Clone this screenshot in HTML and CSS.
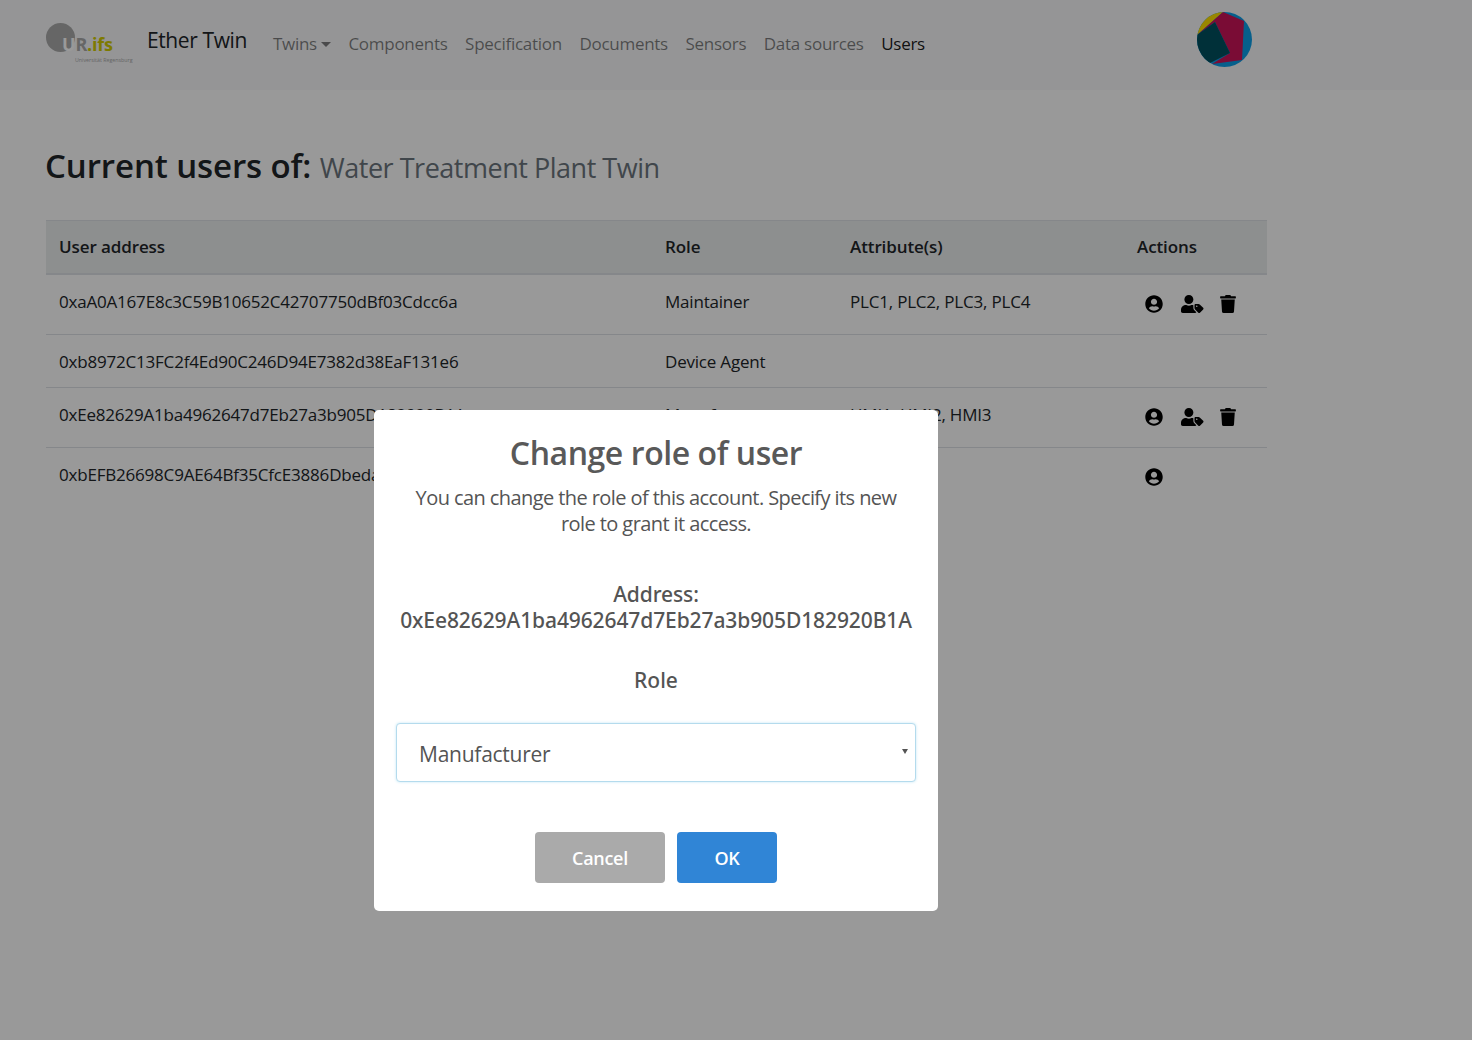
FILE: index.html
```html
<!DOCTYPE html>
<html lang="en">
<head>
  <meta charset="UTF-8">
  <meta name="viewport" content="width=device-width, initial-scale=1.0">
  <title>Ether Twin - Users</title>
  <link rel="stylesheet" href="styles.css">
</head>
<body>
  <nav class="navbar">
    <a class="logo" href="#">
      <svg class="logo-mark" viewBox="0 0 29 29" width="29" height="29">
        <circle cx="14.5" cy="14.5" r="14.5" fill="#aaa"/>
      </svg>
      <span class="logo-text"><span class="logo-u">U</span>R<span class="logo-ifs">.ifs</span></span>
      <span class="logo-sub">Universität Regensburg</span>
    </a>
    <a class="brand" href="#">Ether Twin</a>
    <ul class="nav-links">
      <li><a href="#">Twins<span class="caret"></span></a></li>
      <li><a href="#">Components</a></li>
      <li><a href="#">Specification</a></li>
      <li><a href="#">Documents</a></li>
      <li><a href="#">Sensors</a></li>
      <li><a href="#">Data sources</a></li>
      <li><a class="active" href="#">Users</a></li>
    </ul>
    <svg class="avatar" viewBox="0 0 55 55" width="55" height="55">
      <defs><clipPath id="avatarClip"><circle cx="27.5" cy="27.5" r="27.5"/></clipPath></defs>
      <g clip-path="url(#avatarClip)">
        <rect width="55" height="55" fill="#0b9fe8"/>
        <polygon points="0,0 26,0 0,23" fill="#ffe000"/>
        <polygon points="26,0 47,9 45,48 15,52 33,41 18,10 0,23" fill="#cc1459"/>
        <polygon points="0,23 18,10 33,41 13,51 0,45" fill="#005060"/>
      </g>
    </svg>
  </nav>

  <main class="content">
    <h2 class="page-title">Current users of: <small>Water Treatment Plant Twin</small></h2>
    <table class="users-table">
      <thead>
        <tr>
          <th class="col-address">User address</th>
          <th class="col-role">Role</th>
          <th class="col-attr">Attribute(s)</th>
          <th>Actions</th>
        </tr>
      </thead>
      <tbody>
        <tr>
          <td>0xaA0A167E8c3C59B10652C42707750dBf03Cdcc6a</td>
          <td>Maintainer</td>
          <td>PLC1, PLC2, PLC3, PLC4</td>
          <td>
            <div class="actions">
              <svg class="icon" viewBox="0 0 496 512"><path d="M248 8C111 8 0 119 0 256s111 248 248 248 248-111 248-248S385 8 248 8zm0 96c48.6 0 88 39.4 88 88s-39.4 88-88 88-88-39.4-88-88 39.4-88 88-88zm0 344c-58.7 0-111.3-26.6-146.5-68.2 18.8-35.4 55.6-59.8 98.5-59.8 2.4 0 4.8.4 7.1 1.1 13 4.2 26.6 6.9 40.9 6.9 14.3 0 28-2.7 40.9-6.9 2.3-.7 4.7-1.1 7.1-1.1 42.9 0 79.7 24.4 98.5 59.8C359.3 421.4 306.7 448 248 448z"/></svg>
              <svg class="icon icon-tag" viewBox="0 0 640 512"><path d="M630.6 364.9l-90.3-90.2c-12-12-28.3-18.7-45.3-18.7h-79.3c-17.7 0-32 14.3-32 32v79.2c0 17 6.7 33.2 18.7 45.2l90.3 90.2c12.5 12.5 32.8 12.5 45.3 0l92.5-92.5c12.6-12.5 12.6-32.7.1-45.2zm-182.8-21c-13.3 0-24-10.7-24-24s10.7-24 24-24 24 10.7 24 24c0 13.2-10.7 24-24 24zm-223.8-88c70.7 0 128-57.3 128-128C352 57.3 294.7 0 224 0S96 57.3 96 128c0 70.6 57.3 128 128 128zm127.8 111.2V294c-12.2-3.6-24.9-6.2-38.2-6.2h-16.7c-22.2 10.2-46.9 16-72.9 16s-50.6-5.8-72.9-16h-16.7C60.2 288 0 348.2 0 422.4V464c0 26.5 21.5 48 48 48h352c15.5 0 29.1-7.5 37.9-18.9l-58-58c-18.1-18.1-28.1-42.2-28.1-67.9z"/></svg>
              <svg class="icon icon-trash" viewBox="0 0 448 512"><path d="M432 32H312l-9.4-18.7A24 24 0 0 0 281.1 0H166.8a23.72 23.72 0 0 0-21.4 13.3L136 32H16A16 16 0 0 0 0 48v32a16 16 0 0 0 16 16h416a16 16 0 0 0 16-16V48a16 16 0 0 0-16-16zM53.2 467a48 48 0 0 0 47.9 45h245.8a48 48 0 0 0 47.9-45L416 128H32z"/></svg>
            </div>
          </td>
        </tr>
        <tr class="row-short">
          <td>0xb8972C13FC2f4Ed90C246D94E7382d38EaF131e6</td>
          <td>Device Agent</td>
          <td></td>
          <td></td>
        </tr>
        <tr>
          <td>0xEe82629A1ba4962647d7Eb27a3b905D182920B1A</td>
          <td>Manufacturer</td>
          <td>HMI1, HMI2, HMI3</td>
          <td>
            <div class="actions">
              <svg class="icon" viewBox="0 0 496 512"><path d="M248 8C111 8 0 119 0 256s111 248 248 248 248-111 248-248S385 8 248 8zm0 96c48.6 0 88 39.4 88 88s-39.4 88-88 88-88-39.4-88-88 39.4-88 88-88zm0 344c-58.7 0-111.3-26.6-146.5-68.2 18.8-35.4 55.6-59.8 98.5-59.8 2.4 0 4.8.4 7.1 1.1 13 4.2 26.6 6.9 40.9 6.9 14.3 0 28-2.7 40.9-6.9 2.3-.7 4.7-1.1 7.1-1.1 42.9 0 79.7 24.4 98.5 59.8C359.3 421.4 306.7 448 248 448z"/></svg>
              <svg class="icon icon-tag" viewBox="0 0 640 512"><path d="M630.6 364.9l-90.3-90.2c-12-12-28.3-18.7-45.3-18.7h-79.3c-17.7 0-32 14.3-32 32v79.2c0 17 6.7 33.2 18.7 45.2l90.3 90.2c12.5 12.5 32.8 12.5 45.3 0l92.5-92.5c12.6-12.5 12.6-32.7.1-45.2zm-182.8-21c-13.3 0-24-10.7-24-24s10.7-24 24-24 24 10.7 24 24c0 13.2-10.7 24-24 24zm-223.8-88c70.7 0 128-57.3 128-128C352 57.3 294.7 0 224 0S96 57.3 96 128c0 70.6 57.3 128 128 128zm127.8 111.2V294c-12.2-3.6-24.9-6.2-38.2-6.2h-16.7c-22.2 10.2-46.9 16-72.9 16s-50.6-5.8-72.9-16h-16.7C60.2 288 0 348.2 0 422.4V464c0 26.5 21.5 48 48 48h352c15.5 0 29.1-7.5 37.9-18.9l-58-58c-18.1-18.1-28.1-42.2-28.1-67.9z"/></svg>
              <svg class="icon icon-trash" viewBox="0 0 448 512"><path d="M432 32H312l-9.4-18.7A24 24 0 0 0 281.1 0H166.8a23.72 23.72 0 0 0-21.4 13.3L136 32H16A16 16 0 0 0 0 48v32a16 16 0 0 0 16 16h416a16 16 0 0 0 16-16V48a16 16 0 0 0-16-16zM53.2 467a48 48 0 0 0 47.9 45h245.8a48 48 0 0 0 47.9-45L416 128H32z"/></svg>
            </div>
          </td>
        </tr>
        <tr class="row-last">
          <td>0xbEFB26698C9AE64Bf35CfcE3886DbedaC41C2f4e</td>
          <td></td>
          <td></td>
          <td>
            <div class="actions">
              <svg class="icon" viewBox="0 0 496 512"><path d="M248 8C111 8 0 119 0 256s111 248 248 248 248-111 248-248S385 8 248 8zm0 96c48.6 0 88 39.4 88 88s-39.4 88-88 88-88-39.4-88-88 39.4-88 88-88zm0 344c-58.7 0-111.3-26.6-146.5-68.2 18.8-35.4 55.6-59.8 98.5-59.8 2.4 0 4.8.4 7.1 1.1 13 4.2 26.6 6.9 40.9 6.9 14.3 0 28-2.7 40.9-6.9 2.3-.7 4.7-1.1 7.1-1.1 42.9 0 79.7 24.4 98.5 59.8C359.3 421.4 306.7 448 248 448z"/></svg>
            </div>
          </td>
        </tr>
      </tbody>
    </table>
  </main>

  <div class="overlay">
    <div class="modal">
      <h2 class="modal-title">Change role of user</h2>
      <p class="modal-text">You can change the role of this account. Specify its new role to grant it access.</p>
      <p class="modal-address">Address:<br>0xEe82629A1ba4962647d7Eb27a3b905D182920B1A</p>
      <label class="modal-label" for="role">Role</label>
      <div class="select-wrap">
        <select class="modal-select" id="role">
          <option>Manufacturer</option>
          <option>Maintainer</option>
          <option>Device Agent</option>
        </select>
      </div>
      <div class="modal-buttons">
        <button class="btn btn-cancel" type="button">Cancel</button>
        <button class="btn btn-ok" type="button">OK</button>
      </div>
    </div>
  </div>
</body>
</html>
```

FILE: styles.css
```css
* {
  box-sizing: border-box;
}

body {
  font-family: "Open Sans", "Noto Sans", Arial, sans-serif;
  background-color: #fff;
  color: #212529;
  margin: 0;
  height: 1040px;
  overflow: hidden;
  font-size: 16px;
}

a {
  text-decoration: none;
  color: inherit;
}

/* Navbar */
.navbar {
  display: flex;
  align-items: center;
  height: 90px;
  padding: 0 0 0 46px;
  background-color: #f8f9fa;
}

.logo {
  position: relative;
  display: block;
  width: 87px;
  height: 46px;
  margin-top: 2px;
}

.logo-mark {
  position: absolute;
  left: 0;
  top: 0;
}

.logo-text {
  position: absolute;
  left: 16px;
  top: 9px;
  font-size: 18px;
  font-weight: 700;
  line-height: 24px;
  letter-spacing: -0.2px;
  color: #aaa;
}

.logo-u {
  color: #fff;
}

.logo-ifs {
  color: #d2cc00;
}

.logo-sub {
  position: absolute;
  left: 29px;
  top: 33px;
  font-size: 5.3px;
  white-space: nowrap;
  color: #aaa;
}

.brand {
  margin-left: 14px;
  margin-top: -10px;
  font-size: 21px;
  color: #212529;
  letter-spacing: -0.4px;
}

.nav-links {
  display: flex;
  list-style: none;
  margin: -4px 0 0 26px;
  padding: 0;
  gap: 17.5px;
  font-size: 17px;
  letter-spacing: -0.27px;
  color: rgba(0, 0, 0, 0.5);
}

.nav-links .active {
  color: rgba(0, 0, 0, 0.9);
}

.caret {
  display: inline-block;
  margin-left: 4px;
  vertical-align: 3px;
  border-top: 5px solid;
  border-left: 5px solid transparent;
  border-right: 5px solid transparent;
}

.avatar {
  position: absolute;
  left: 1197px;
  top: 12px;
}

/* Page */
.content {
  padding: 54px 0 0 46px;
  width: 1267px;
}

.page-title {
  margin: 0 0 32px -1px;
  height: 44px;
  font-size: 33px;
  font-weight: 600;
  line-height: 44px;
  letter-spacing: -0.1px;
}

.page-title small {
  font-size: 27px;
  font-weight: 400;
  letter-spacing: -0.48px;
  color: #6c757d;
}

.users-table {
  width: 100%;
  border-collapse: separate;
  border-spacing: 0;
  table-layout: fixed;
  font-size: 17px;
  letter-spacing: -0.2px;
}

.users-table th {
  height: 55px;
  padding: 0 13px 2px;
  text-align: left;
  font-weight: 600;
  font-size: 17px;
  letter-spacing: -0.1px;
  background-color: #eceeef;
  color: #212529;
  border-top: 1px solid #dee2e6;
  border-bottom: 2px solid #dee2e6;
}

.col-address {
  width: 606px;
}

.col-role {
  width: 185px;
}

.col-attr {
  width: 287px;
}

.users-table td {
  height: 60px;
  padding: 15px 13px 0;
  vertical-align: top;
  border-bottom: 1px solid #dee2e6;
  white-space: nowrap;
}

.users-table .row-short td {
  height: 53px;
}

.users-table .row-last td {
  border-bottom: none;
}

.actions {
  display: flex;
  align-items: center;
  gap: 18px;
  padding: 5px 0 0 8px;
}

.icon {
  width: 18px;
  height: 18px;
  fill: #000;
  flex: none;
}

.icon-tag {
  width: 22.5px;
}

.icon-trash {
  width: 16px;
  margin-left: -1.5px;
}

/* Modal */
.overlay {
  position: fixed;
  inset: 0;
  padding: 410px 0 0 374px;
  background-color: rgba(0, 0, 0, 0.4);
}

.modal {
  display: flex;
  flex-direction: column;
  align-items: center;
  width: 564px;
  height: 501px;
  padding: 20px 22px 0;
  background-color: #fff;
  border-radius: 5px;
  text-align: center;
  color: #545454;
}

.modal-title {
  margin: 0;
  font-size: 32px;
  font-weight: 600;
  line-height: 46px;
  color: #595959;
  letter-spacing: -0.43px;
}

.modal-text {
  max-width: 500px;
  margin: 9px 0 0;
  font-size: 20px;
  line-height: 26px;
  letter-spacing: -0.58px;
}

.modal-address {
  margin: 44px 0 0;
  font-family: "Noto Sans", "Open Sans", sans-serif;
  font-size: 21px;
  font-weight: 500;
  line-height: 26px;
  letter-spacing: -0.1px;
  white-space: nowrap;
}

.modal-label {
  margin-top: 34px;
  font-family: "Noto Sans", "Open Sans", sans-serif;
  font-size: 21px;
  font-weight: 500;
  line-height: 26px;
}

.select-wrap {
  position: relative;
  width: 520px;
  height: 59px;
  margin-top: 30px;
}

.select-wrap::after {
  content: "";
  position: absolute;
  right: 8px;
  top: 26px;
  border-top: 5px solid #545454;
  border-left: 3px solid transparent;
  border-right: 3px solid transparent;
}

.modal-select {
  width: 100%;
  height: 100%;
  padding: 2px 22px 0;
  appearance: none;
  font-family: inherit;
  font-size: 21px;
  letter-spacing: -0.25px;
  color: #545454;
  background-color: #fff;
  border: 1px solid #b4dbed;
  border-radius: 4px;
  box-shadow: 0 0 3px #c4e6f5;
}

.modal-buttons {
  display: flex;
  gap: 12px;
  margin-top: 50px;
}

.btn {
  height: 51px;
  border: none;
  border-radius: 4px;
  color: #fff;
  font-family: inherit;
  font-size: 18px;
  font-weight: 600;
  letter-spacing: -0.3px;
}

.btn-cancel {
  width: 130px;
  background-color: #aaa;
}

.btn-ok {
  width: 100px;
  background-color: #3085d6;
}
```
